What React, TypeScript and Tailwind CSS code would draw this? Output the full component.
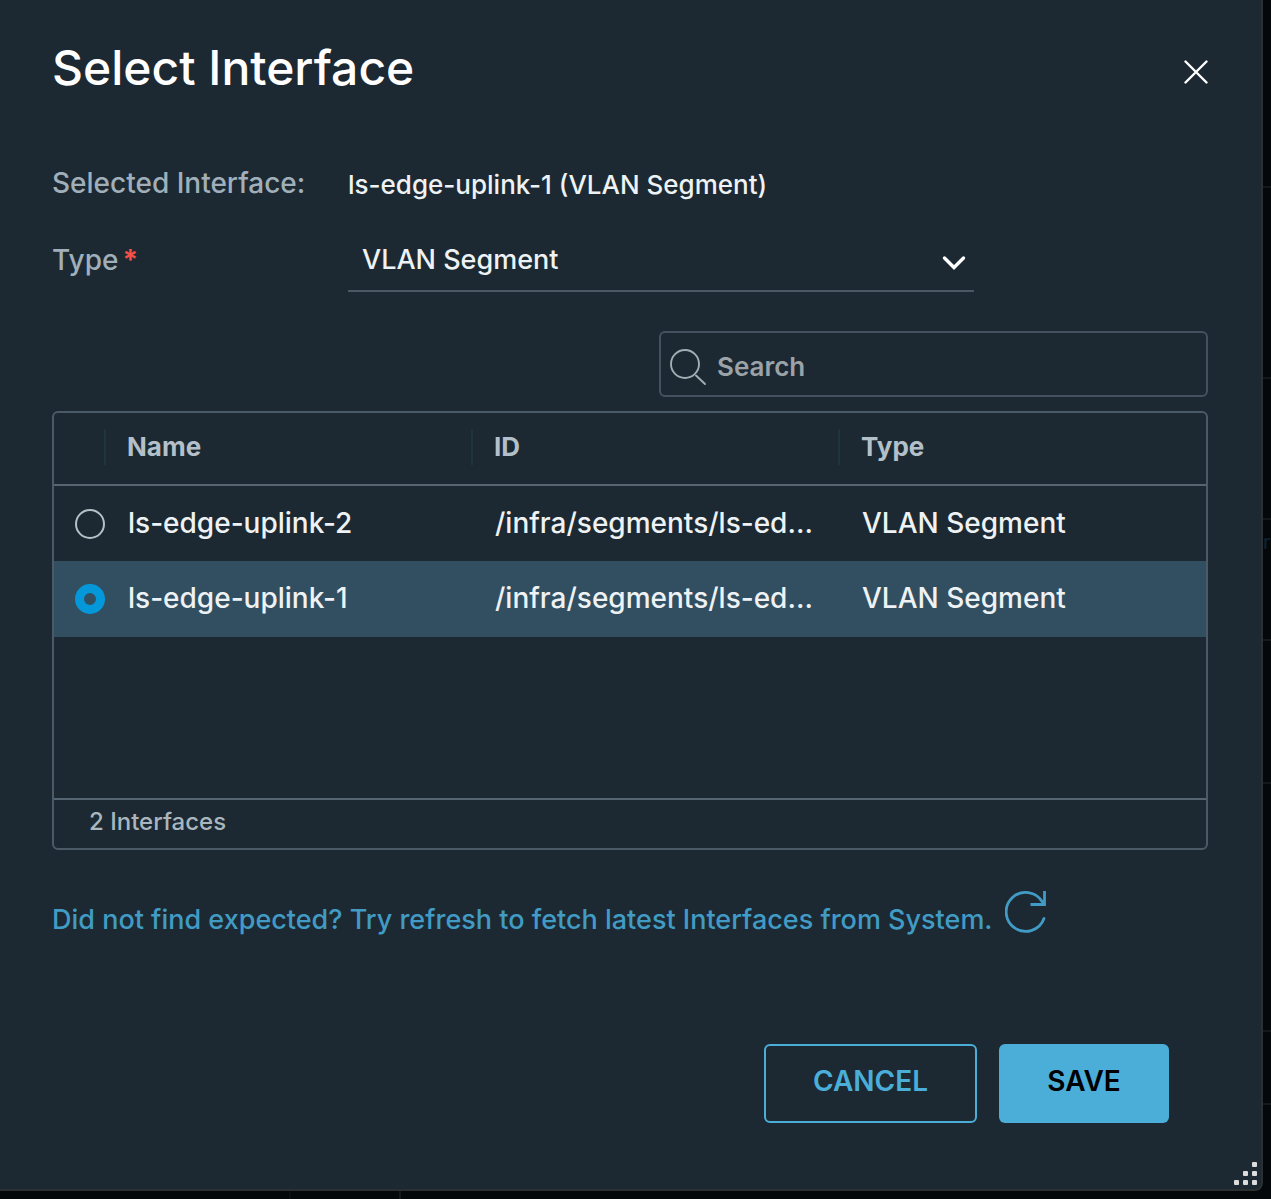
import { useState } from "react";

type NetworkInterface = { id: string; name: string; path: string; type: string };

const interfaces: NetworkInterface[] = [
  { id: "uplink-2", name: "ls-edge-uplink-2", path: "/infra/segments/ls-ed...", type: "VLAN Segment" },
  { id: "uplink-1", name: "ls-edge-uplink-1", path: "/infra/segments/ls-ed...", type: "VLAN Segment" },
];

function CloseIcon() {
  return (
    <svg viewBox="0 0 24 24" className="size-6" fill="none" stroke="currentColor" strokeWidth="2.4" strokeLinecap="round" aria-hidden="true">
      <path d="M1.5 1.5 22.5 22.5M22.5 1.5 1.5 22.5" />
    </svg>
  );
}

function ChevronIcon() {
  return (
    <svg viewBox="0 0 24 16" className="pointer-events-none absolute right-2 top-[25px] h-4 w-6" fill="none" stroke="#fff" strokeWidth="3.4" strokeLinecap="round" aria-hidden="true">
      <path d="M2.5 3 12 12.5 21.5 3" />
    </svg>
  );
}

function SearchIcon() {
  return (
    <svg viewBox="0 0 38 38" className="mt-1.5 size-[38px] shrink-0" fill="none" stroke="#a3adb3" strokeWidth="1.9" strokeLinecap="round" aria-hidden="true">
      <circle cx="16" cy="16" r="14" />
      <path d="M27 27.5 36 36" />
    </svg>
  );
}

function RefreshIcon() {
  return (
    <svg viewBox="0 0 42 43" className="h-[43px] w-[42px]" fill="none" stroke="currentColor" strokeWidth="2.8" aria-hidden="true">
      <path d="M39 28.5A19.5 19.5 0 1 1 37.5 12" strokeLinecap="round" />
      <path d="M39.5 1v13.5H25.5" />
    </svg>
  );
}

function ResizeGrip() {
  return (
    <svg viewBox="0 0 23 23" className="absolute bottom-1 right-1 size-[23px]" fill="#dcdcdc" aria-hidden="true">
      <rect x="18" y="0" width="5" height="5" rx="1" />
      <rect x="9" y="9" width="5" height="5" rx="1" />
      <rect x="18" y="9" width="5" height="5" rx="1" />
      <rect x="0" y="18" width="5" height="5" rx="1" />
      <rect x="9" y="18" width="5" height="5" rx="1" />
      <rect x="18" y="18" width="5" height="5" rx="1" />
    </svg>
  );
}

export default function App() {
  const [selected, setSelected] = useState("uplink-1");
  const current = interfaces.find((item) => item.id === selected) ?? interfaces[0];

  return (
    <div className="flex min-h-screen flex-col overflow-hidden bg-[#04080a] font-['Inter',sans-serif] text-[28px] leading-9 text-[#eef2f4]">
      <div className="flex">
        <div role="dialog" aria-labelledby="dialog-title" className="relative min-w-0 flex-1 rounded-br-lg border-b-2 border-r-2 border-[#2d3031] bg-[#1c2932] pb-[66px] pl-[52px] pr-[53px]">
          <header className="flex items-center justify-between pt-10">
            <h1 id="dialog-title" className="text-5xl font-medium leading-14 text-white">Select Interface</h1>
            <button type="button" aria-label="Close" className="mt-2 text-white">
              <CloseIcon />
            </button>
          </header>

          <div className="mt-[69px] grid grid-cols-[296px_minmax(0,626px)] items-start">
            <span className="font-medium text-[#a0afb9]">Selected Interface:</span>
            <span className="pt-0.5 text-[26px] font-medium">
              {current.name} ({current.type})
            </span>
            <label htmlFor="type" className="mt-[39px] font-medium text-[#a0afb9]">
              Type<span className="ml-1 font-bold text-[#f54f47]">*</span>
            </label>
            <div className="relative mt-[27px]">
              <select id="type" className="h-[62px] w-full appearance-none border-b-2 border-[#495865] bg-transparent pl-3.5 text-[27px] font-medium outline-none">
                <option>VLAN Segment</option>
              </select>
              <ChevronIcon />
            </div>
          </div>

          <label className="ml-auto mt-[39px] flex h-[66px] max-w-[549px] items-center rounded-md border-2 border-[#43525e] pl-2">
            <SearchIcon />
            <input type="search" aria-label="Search interfaces" placeholder="Search" className="ml-2.5 mt-1.5 min-w-0 flex-1 bg-transparent text-[26px] font-semibold outline-none placeholder:text-[#9ba3a8]" />
          </label>

          <div className="mt-3.5 rounded-md border-2 border-[#4b5a67]">
            <div className="min-h-[385px]">
              <table className="w-full table-fixed border-collapse text-left">
                <colgroup>
                  <col className="w-[52px]" />
                  <col className="w-[367px]" />
                  <col className="w-[367px]" />
                  <col />
                </colgroup>
                <thead className="border-b-2 border-[#566572] text-[26px] text-[#b3c0c9]">
                  <tr className="h-[72px]">
                    <th className="p-0 pb-1" aria-label="Select">
                      <div className="h-9 border-r-2 border-[#21333b]" />
                    </th>
                    <th className="p-0 pb-1">
                      <div className="border-r-2 border-[#21333b] pl-[21px]">Name</div>
                    </th>
                    <th className="p-0 pb-1">
                      <div className="border-r-2 border-[#21333b] pl-[21px]">ID</div>
                    </th>
                    <th className="p-0 pb-1 pl-[21px]">Type</th>
                  </tr>
                </thead>
                <tbody className="font-medium">
                  {interfaces.map((item) => (
                    <tr key={item.id} className="h-[76px] has-checked:bg-[#324f61]">
                      <td className="p-0 pl-[21px]">
                        <input
                          type="radio"
                          name="interface"
                          aria-label={item.name}
                          checked={selected === item.id}
                          onChange={() => setSelected(item.id)}
                          className="block size-[30px] appearance-none rounded-full border-2 border-[#b5c0c7] checked:border-[9px] checked:border-[#0498db]"
                        />
                      </td>
                      <td className="whitespace-nowrap p-0 pb-0.5 pl-[22px]">{item.name}</td>
                      <td className="whitespace-nowrap p-0 pb-0.5 pl-[22px]">{item.path}</td>
                      <td className="whitespace-nowrap p-0 pb-0.5 pl-[22px]">{item.type}</td>
                    </tr>
                  ))}
                </tbody>
              </table>
            </div>
            <div className="h-[50px] border-t-2 border-[#566572] pl-[35px] pt-1 text-2xl font-medium leading-9 text-[#a9b6be]">{interfaces.length} Interfaces</div>
          </div>

          <a href="#refresh" className="mt-10 flex items-start gap-3 whitespace-nowrap text-[27px] font-medium text-[#419bc4]">
            <span className="mt-3">Did not find expected? Try refresh to fetch latest Interfaces from System.</span>
            <RefreshIcon />
          </a>

          <footer className="mr-[39px] mt-[106px] flex justify-end gap-[22px] font-semibold">
            <button type="button" className="h-[79px] w-[213px] rounded-md border-2 border-[#4aaed9] pb-1.5 text-[#4aaed9]">
              CANCEL
            </button>
            <button type="button" className="h-[79px] w-[170px] rounded-md bg-[#4aaed9] pb-1.5 text-black">
              SAVE
            </button>
          </footer>
          <ResizeGrip />
        </div>
        <div className="flex w-2 shrink-0 flex-col" aria-hidden="true">
          <div className="h-[188px] border-b-2 border-[#14181b]" />
          <div className="h-[191px] border-b-2 border-[#14181b]" />
          <div className="h-[141px] border-b-2 border-[#14181b]" />
          <div className="flex h-[121px] items-start overflow-hidden border-b-2 border-[#14181b] pt-2 text-xl text-[#0d2630]">r</div>
          <div className="h-[143px] border-b-2 border-[#14181b]" />
          <div className="h-[248px] border-b-2 border-[#14181b]" />
          <div className="h-[73px] border-b-2 border-[#14181b]" />
        </div>
      </div>
      <div className="flex flex-1" aria-hidden="true">
        <div className="w-[291px] border-r-2 border-[#090e11]" />
        <div className="w-[110px] border-r-2 border-[#14181b]" />
      </div>
    </div>
  );
}
